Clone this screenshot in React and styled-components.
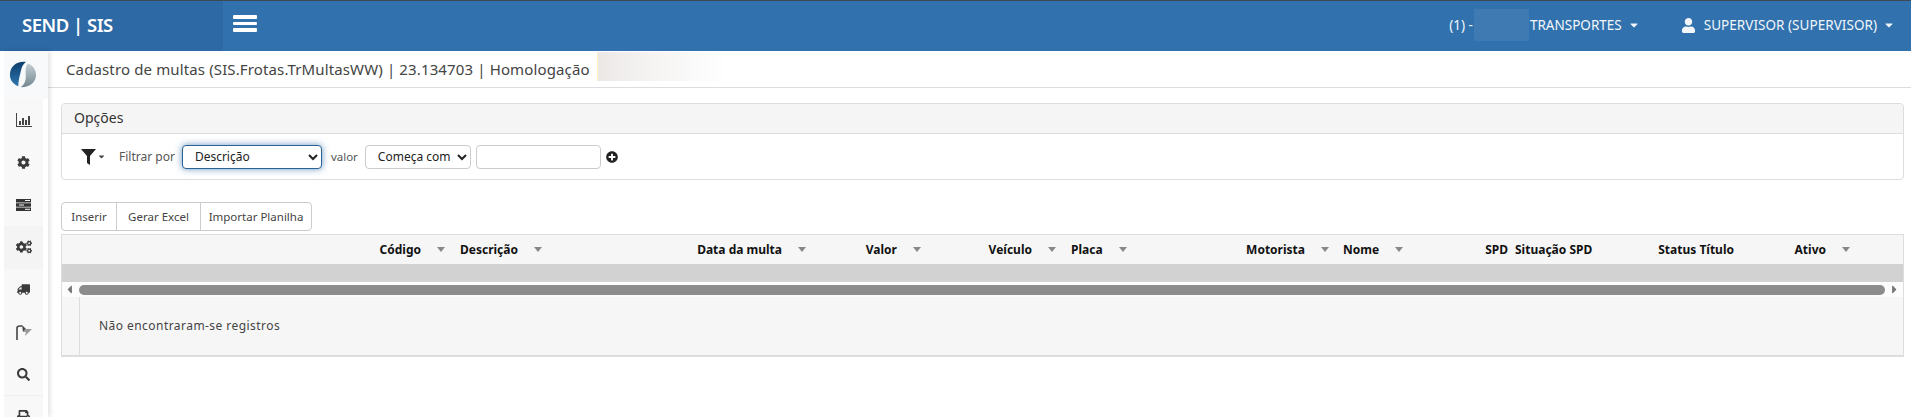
import React from "react";
import styled, { createGlobalStyle } from "styled-components";
import { FaCog, FaCogs, FaTruck, FaSearch, FaPrint, FaPlusCircle, FaUser, FaCaretDown, FaCaretLeft, FaCaretRight } from "react-icons/fa";

const Global = createGlobalStyle`
  html, body { margin: 0; padding: 0; background: #fff; overflow: hidden; height: 417px; }
  body { font-family: "Noto Sans", "DejaVu Sans", sans-serif; color: #333; }
  * { box-sizing: border-box; }
`;

const Page = styled.div`display: flex; flex-direction: column; width: 1911px; height: 417px; overflow: hidden;`;
const TopBar = styled.header`
  display: flex; align-items: stretch; height: 51px; flex: none;
  background: #3172ae; border-top: 1px solid #3d4a56; color: #fff;
`;
const Brand = styled.div`
  width: 223px; background: #2c69a5; padding-left: 22px; display: flex; align-items: center;
  font-size: 18.5px; font-weight: 600; letter-spacing: -0.5px; padding-bottom: 3px;
`;
const Burger = styled.button`
  display: flex; flex-direction: column; gap: 3px; background: none; border: 0; padding: 0;
  width: 24px; margin: 14px 0 0 10px; height: 17px;
  & > i { display: block; height: 4px; background: #fff; border-radius: 1px; }
`;
const TopRight = styled.div`
  margin-left: auto; display: flex; align-items: center; padding-bottom: 2px; font-size: 13.5px; color: #f2f6fa;
`;
const Blur = styled.span`display: block; width: 55px; height: 32px; background: #3f7ab2; margin: 0 1px 0 1px;`;
const Caret = styled(FaCaretDown)`font-size: 12px; margin-left: 6px;`;
const UserGroup = styled.div`display: flex; align-items: center; margin-left: 41px; margin-right: 16px; letter-spacing: .04px;`;
const UserIcon = styled(FaUser)`font-size: 15px; margin-right: 8px;`;

const Body = styled.div`display: flex; flex: 1; min-height: 0;`;
const Side = styled.nav`
  width: 48px; flex: none; background: #fff; box-shadow: 2px 0 5px rgba(0,0,0,.12); position: relative;
  padding-left: 4px; display: flex; flex-direction: column; z-index: 2;
`;
const LogoCell = styled.div`height: 48px; flex: none; background: #f8f9fb; display: flex; align-items: center; padding-left: 5px; padding-bottom: 2px;`;
const Item = styled.div`
  height: 42.4px; width: 39px; flex: none; display: flex; align-items: center; justify-content: center;
  background: ${p => p.$active ? "#f4f4f4" : "#f8f8f8"}; color: #3a3a3a; font-size: 13px;
  border-bottom: ${p => p.$rule ? "1px solid #efefef" : "0"};
`;
const Main = styled.main`flex: 1; min-width: 0; display: flex; flex-direction: column;`;
const Crumb = styled.div`
  height: 37px; border-bottom: 1px solid #ddd; display: flex; align-items: center; padding-left: 18px; flex: none;
  font-size: 15px; letter-spacing: 0.13px; color: #444;
`;
const Smear = styled.span`
  display: block; width: 130px; height: 29px; margin-left: 7px; margin-top: -6px;
  background: linear-gradient(90deg, #ebe8e6, #f3f1f0 30%, #fff);
  border-left: 1px solid #fdf1c4;
`;
const Content = styled.div`padding: 15px 7px 0 13px;`;
const Panel = styled.section`border: 1px solid #ddd; border-radius: 4px; height: 77px; background: #fff;`;
const PanelHead = styled.div`
  height: 30px; background: #f5f5f5; border-bottom: 1px solid #ddd; font-size: 14px; color: #333;
  padding: 0 0 2px 12px; display: flex; align-items: center; border-radius: 4px 4px 0 0;
`;
const FilterRow = styled.div`display: flex; align-items: center; height: 45px; padding-left: 19px; font-size: 12px; color: #555;`;
const FilterBtn = styled.div`display: flex; align-items: center; color: #222; width: 38px;`;
const FilterCaret = styled(FaCaretDown)`font-size: 9px; color: #444; margin-left: 1px;`;
const Select = styled.select`
  height: 24px; border-radius: 4px; background: #fff; color: #222; font: 12px "Noto Sans", sans-serif;
  width: ${p => p.$w}px; padding-left: ${p => p.$pl}px; outline: 0;
  border: 1px solid ${p => p.$focus ? "#2a6496" : "#ccc"};
  box-shadow: ${p => p.$focus ? "0 0 7px rgba(44,105,165,.7)" : "none"};
`;
const Label = styled.span`margin: ${p => p.$m}; font-size: ${p => p.$size || 12}px;`;
const TextBox = styled.input`height: 24px; width: 125px; border: 1px solid #ccc; border-radius: 4px; margin-left: 5px; background: #fff;`;
const Plus = styled(FaPlusCircle)`font-size: 12px; color: #222; margin-left: 5px;`;
const BtnGroup = styled.div`display: flex; margin-top: 22px; height: 29px;`;
const Btn = styled.button`
  height: 29px; width: ${p => p.$w}px; padding: 0; background: #fff; border: 1px solid #ccc; margin-left: -1px; color: #444;
  font: 11.5px "Noto Sans", sans-serif;
  &:first-child { margin-left: 0; border-radius: 4px 0 0 4px; }
  &:last-child { border-radius: 0 4px 4px 0; }
`;
const Grid = styled.div`margin-top: 3px; border: 1px solid #ddd; border-width: 1px 1px 2px 1px; height: 123px; background: #f6f6f6; display: flex; flex-direction: column;`;
const HeadRow = styled.div`display: flex; height: 29px; flex: none; align-items: center; font-size: 12px; font-weight: 700; color: #111; background: #f6f6f6;`;
const HCell = styled.div`
  width: ${p => p.$w}px; flex: none; display: flex; align-items: center;
  justify-content: ${p => p.$left ? "flex-start" : "flex-end"};
  padding: ${p => p.$left ? `0 0 0 ${p.$pad}px` : `0 ${p.$pad}px 0 0`};
`;
const SortMark = styled.i`display: block; width: 0; height: 0; border: 4px solid transparent; border-top: 5px solid #888; border-bottom: 0; margin-left: 16px;`;
const GreyRow = styled.div`height: 18px; background: #d2d2d2; flex: none;`;
const Scroll = styled.div`height: 15px; background: #fcfcfc; display: flex; align-items: center; flex: none; color: #777; font-size: 13px; padding-left: 1px;`;
const Thumb = styled.div`height: 10px; width: 1806px; margin: 0 3px; background: #8c8c8c; border-radius: 5px;`;
const Empty = styled.div`flex: 1; display: flex; font-size: 12px; color: #444;`;
const Gutter = styled.div`width: 18px; border-right: 1px solid #ddd;`;
const Message = styled.div`padding-left: 19px; display: flex; align-items: center; padding-bottom: 1px; letter-spacing: .45px;`;

const Logo = () => (
  <svg width="28" height="29" viewBox="0 0 30 29">
    <defs>
      <linearGradient id="lb" x1="0" y1="0" x2="0" y2="1"><stop offset="0" stopColor="#0d3d6e" /><stop offset="1" stopColor="#2e76ad" /></linearGradient>
      <linearGradient id="lg" x1="0" y1="0" x2="0" y2="1"><stop offset="0" stopColor="#c4ced4" /><stop offset="1" stopColor="#74878f" /></linearGradient>
    </defs>
    <path d="M18 1C8 0 1 6 1 15c0 6 4 10 9 12 0-5 1-9 2-13 1-5 2-10 6-13z" fill="url(#lb)" />
    <path d="M20 3c5 1 9 6 9 12 0 8-8 14-17 13 4-2 6-6 6-12 0-4-1-9 2-13z" fill="url(#lg)" />
  </svg>
);
const ChartIcon = () => (
  <svg width="16" height="14" viewBox="0 0 16 14" fill="#444">
    <rect x="0" y="0" width="1" height="14" /><rect x="0" y="13" width="16" height="1" />
    <rect x="3" y="8" width="2" height="4" /><rect x="6" y="5" width="2" height="7" /><rect x="9" y="7" width="2" height="5" /><rect x="12" y="3" width="2" height="9" />
  </svg>
);
const TasksIcon = () => (
  <svg width="15" height="12" viewBox="0 0 15 12" fill="#333">
    <path d="M0 0h15v3.500H0zM0 4.300h15v3.400H0zM0 8.500h15V12H0z" />
    <rect x="9" y="1" width="5" height="1" fill="#f8f8f8" /><rect x="3" y="5.500" width="5" height="1" fill="#f8f8f8" /><rect x="9" y="9.800" width="5" height="1" fill="#f8f8f8" />
  </svg>
);
const FlagIcon = () => (
  <svg width="16" height="15" viewBox="0 0 16 15">
    <path d="M1 15V3c0-1.500 1.500-2 3-2h2" fill="none" stroke="#444" strokeWidth="1.600" />
    <path d="M6 0l4 4-3 3z" fill="#444" />
    <path d="M9 4h7l-7 7 1-4H7z" fill="#999" />
  </svg>
);
const FunnelIcon = () => (
  <svg width="15" height="16" viewBox="0 0 15 16" fill="#222">
    <path d="M0 0h15L9 7v9L6 14V7z" />
  </svg>
);

const cols = [
  ["Código", 389, false, true, 6], ["Descrição", 200, true, true, 9], ["Data da multa", 161, false, true, 6],
  ["Valor", 115, false, true, 6], ["Veículo", 135, false, true, 6], ["Placa", 138, true, true, 9],
  ["Motorista", 135, false, true, 6], ["Nome", 115, true, true, 8], ["SPD", 64, false, false, 6],
  ["Situação SPD", 106, true, false, 1], ["Status Título", 120, false, false, 6], ["Ativo", 116, false, true, 6],
];

export default function App() {
  return (
    <Page>
      <Global />
      <TopBar>
        <Brand>SEND | SIS</Brand>
        <Burger aria-label="menu"><i /><i /><i /></Burger>
        <TopRight>
          (1) -<Blur />TRANSPORTES<Caret />
          <UserGroup><UserIcon />SUPERVISOR (SUPERVISOR)<Caret /></UserGroup>
        </TopRight>
      </TopBar>
      <Body>
        <Side>
          <LogoCell><Logo /></LogoCell>
          <Item><ChartIcon /></Item>
          <Item><FaCog /></Item>
          <Item><TasksIcon /></Item>
          <Item $active><FaCogs size={16} /></Item>
          <Item><FaTruck style={{ transform: "scaleX(-1)" }} /></Item>
          <Item><FlagIcon /></Item>
          <Item $rule><FaSearch /></Item>
          <Item><FaPrint /></Item>
        </Side>
        <Main>
          <Crumb>Cadastro de multas (SIS.Frotas.TrMultasWW) | 23.134703 | Homologação<Smear /></Crumb>
          <Content>
            <Panel>
              <PanelHead>Opções</PanelHead>
              <FilterRow>
                <FilterBtn><FunnelIcon /><FilterCaret /></FilterBtn>
                <Label $m="0 7px 0 0">Filtrar por</Label>
                <Select $w={140} $pl={8} $focus defaultValue="d"><option value="d">Descrição</option></Select>
                <Label $m="0 7px 0 9px" $size={11.5}>valor</Label>
                <Select $w={106} $pl={8} defaultValue="c"><option value="c">Começa com</option></Select>
                <TextBox />
                <Plus />
              </FilterRow>
            </Panel>
            <BtnGroup>
              <Btn $w={56}>Inserir</Btn>
              <Btn $w={85}>Gerar Excel</Btn>
              <Btn $w={112}>Importar Planilha</Btn>
            </BtnGroup>
            <Grid>
              <HeadRow>
                {cols.map(([t, w, left, sort, pad]) => (
                  <HCell key={t} $w={w} $left={left} $pad={pad}>{t}{sort && <SortMark />}</HCell>
                ))}
              </HeadRow>
              <GreyRow />
              <Scroll><FaCaretLeft /><Thumb /><FaCaretRight /></Scroll>
              <Empty>
                <Gutter />
                <Message>Não encontraram-se registros</Message>
              </Empty>
            </Grid>
          </Content>
        </Main>
      </Body>
    </Page>
  );
}
